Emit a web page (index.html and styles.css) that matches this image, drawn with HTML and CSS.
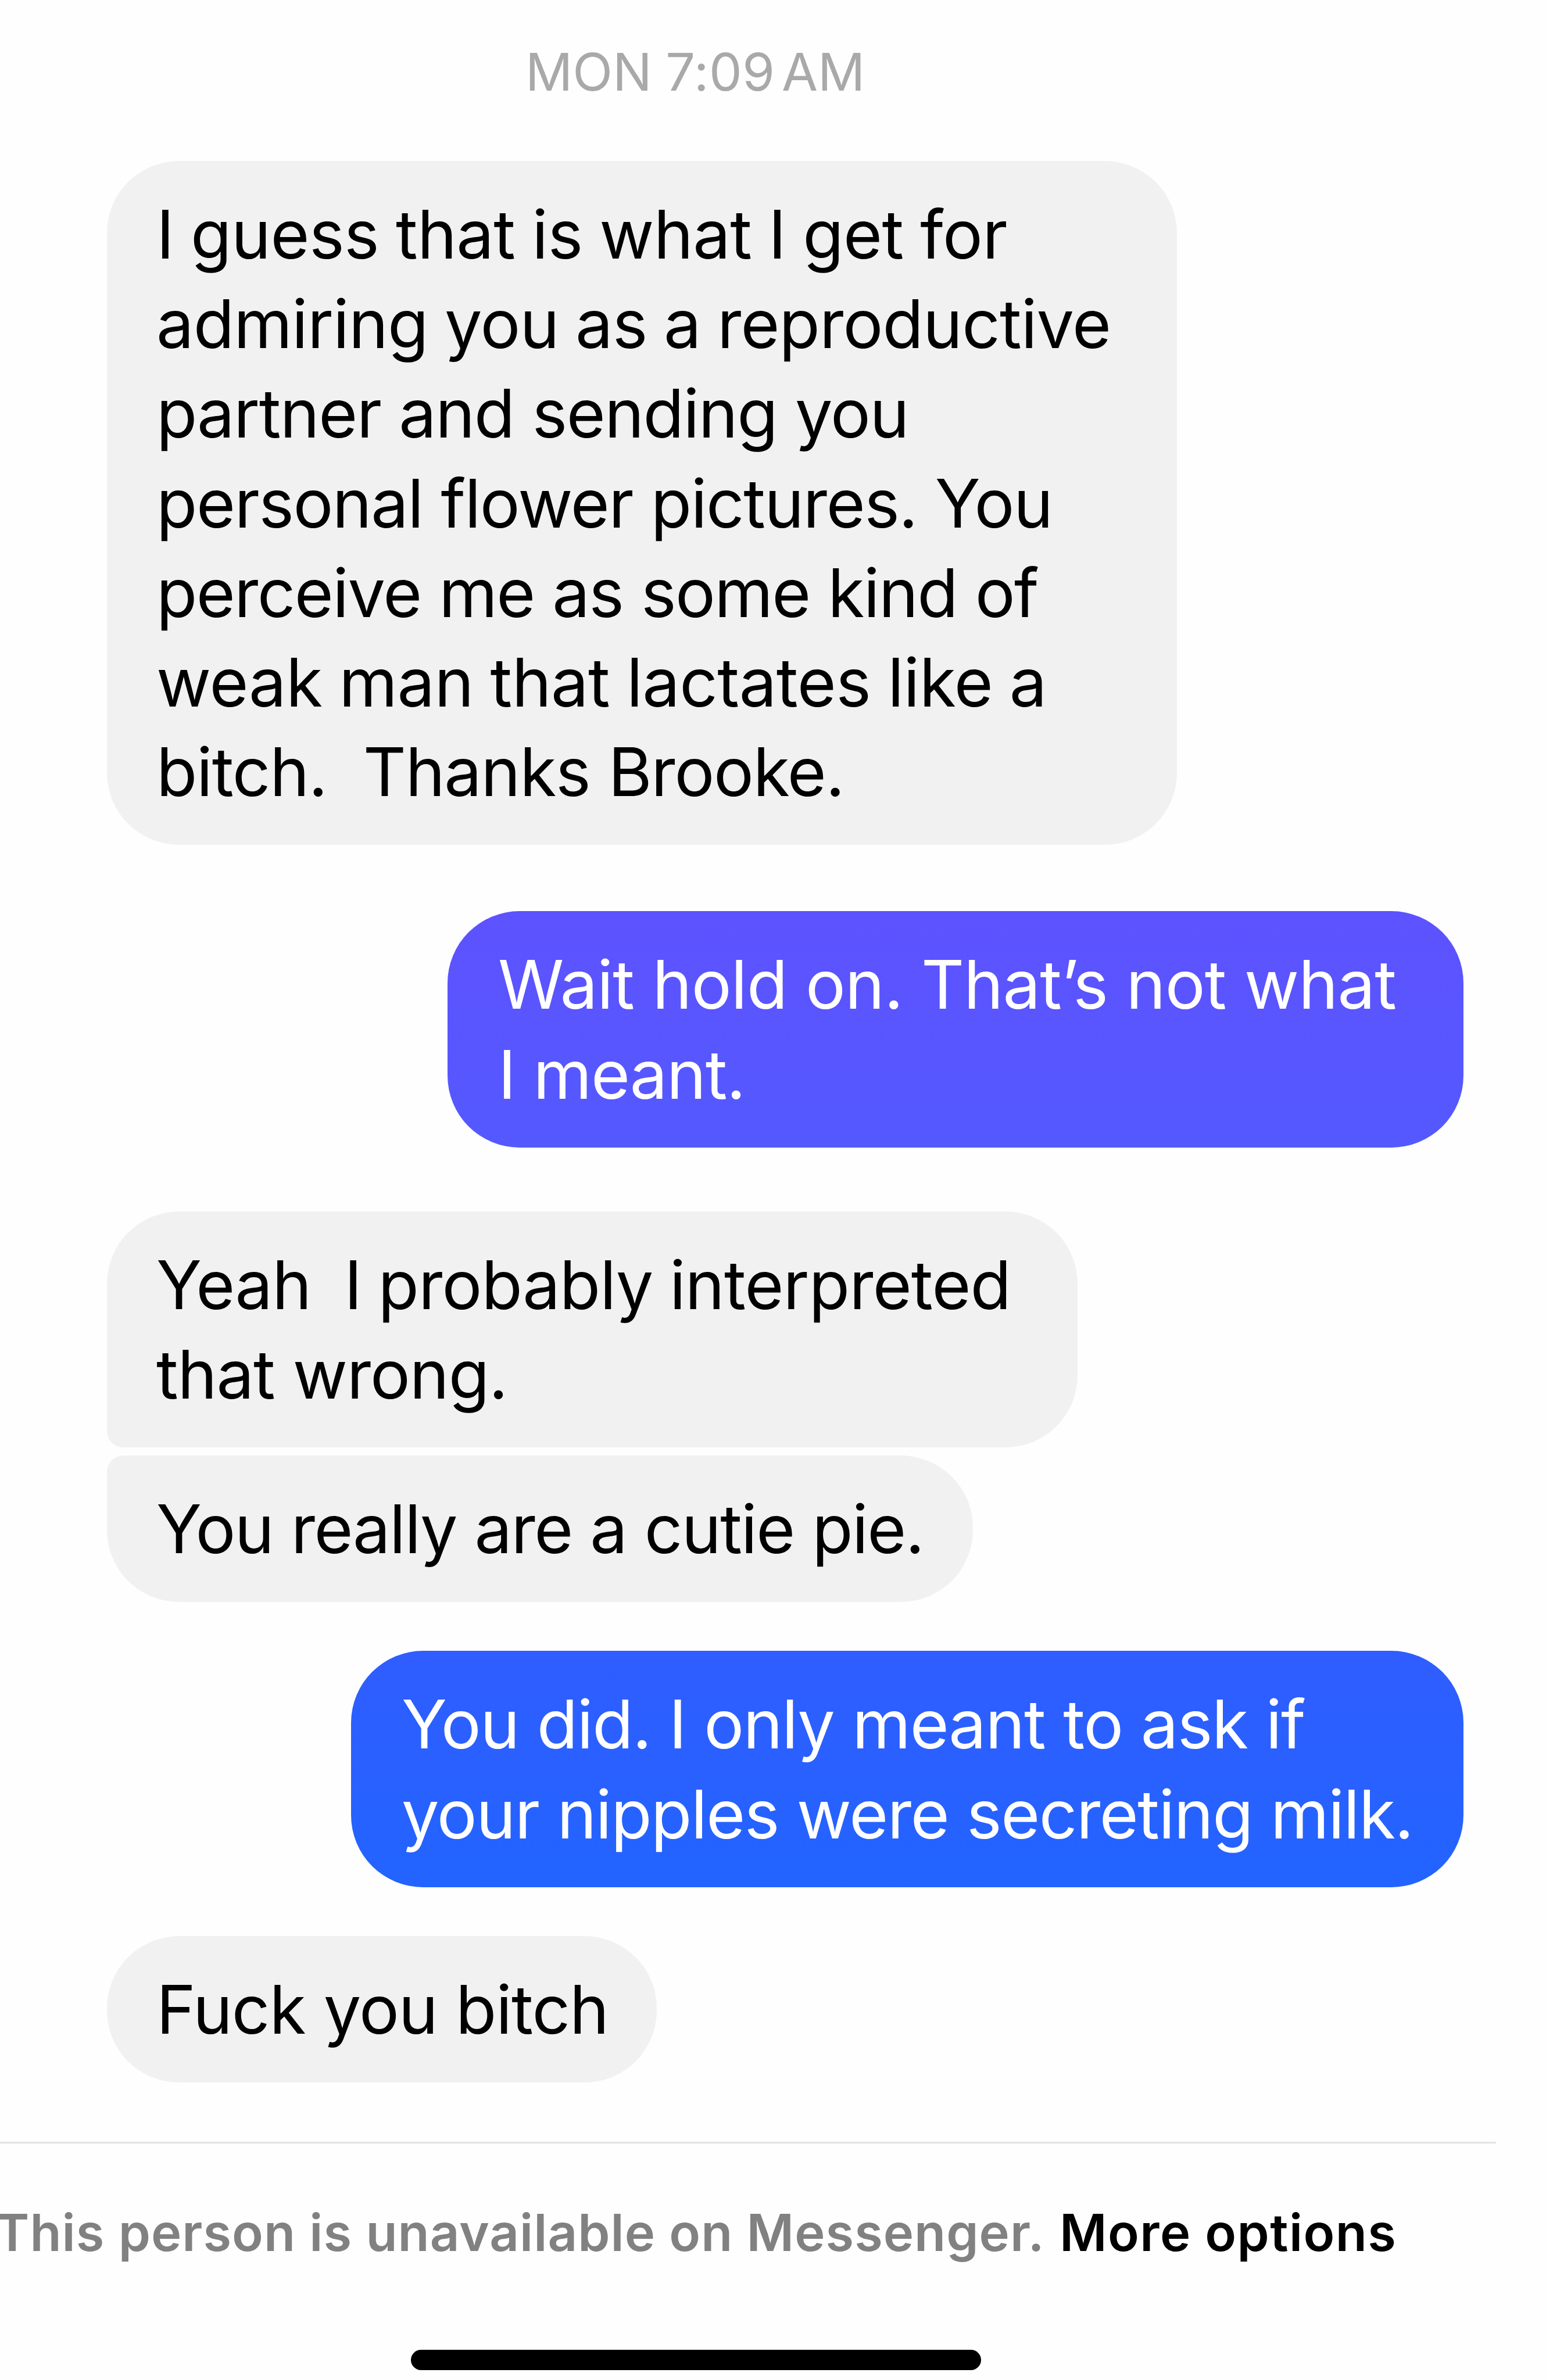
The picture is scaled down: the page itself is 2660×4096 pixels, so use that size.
FILE: index.html
```html
<!DOCTYPE html>
<html lang="en">
<head>
    <meta charset="UTF-8">
    <meta name="viewport" content="width=device-width, initial-scale=1.0">
    <title>Messenger</title>
    <link rel="stylesheet" href="styles.css">
</head>
<body>
    <div class="timestamp">MON <span class="time">7:09</span><span class="ampm"> AM</span></div>
    <div class="chat">
        <div class="bubble them guess">
            <span class="ls6 narrow">I guess that is what I get for</span>
            <span class="ls9 narrow">admiring you as a reproductive</span>
            <span class="ls15">partner and sending you</span>
            <span class="ls15">personal flower pictures. You</span>
            <span class="ls17">perceive me as some kind of</span>
            <span class="ls6 narrow">weak man that lactates like a</span>
            <span class="ls13">bitch.&nbsp; Thanks Brooke.</span>
        </div>
        <div class="bubble me wait">
            <span class="ls8">Wait hold on. That’s not what</span>
            <span class="ls13">I meant.</span>
        </div>
        <div class="bubble them yeah">
            <span class="ls9 narrow">Yeah&nbsp; I probably interpreted</span>
            <span class="ls11">that wrong.</span>
        </div>
        <div class="bubble them cutie">
            <span class="ls17">You really are a cutie pie.</span>
        </div>
        <div class="bubble me did">
            <span class="ls14">You did. I only meant to ask if</span>
            <span class="ls15">your nipples were secreting milk.</span>
        </div>
        <div class="bubble them last">
            <span class="ls11">Fuck you bitch</span>
        </div>
    </div>
    <div class="footer">
        <span class="unavailable">This person is unavailable on Messenger.</span>
        <span class="more">More options</span>
    </div>
    <div class="home-bar"></div>
</body>
</html>
```
FILE: styles.css
```css
body {
    margin: 0;
    height: 4096px;
    overflow: hidden;
    background: #fefefe;
    font-family: Inter, "Liberation Sans", sans-serif;
}
.timestamp {
    padding: 69px 0 0 904px;
    font-size: 90px;
    line-height: 109px;
    color: #a9a9a9;
    white-space: nowrap;
}
.time {
    margin-left: -2px;
    letter-spacing: 0.5px;
}
.ampm {
    word-spacing: -14px;
}
.chat {
    display: flex;
    flex-direction: column;
    align-items: flex-start;
    padding: 99px 142px 0 184px;
}
.bubble {
    box-sizing: border-box;
    padding: 50px 0 48px 85px;
    border-radius: 124px;
    font-size: 115px;
    line-height: 154.2px;
    white-space: nowrap;
}
.bubble span {
    display: block;
}
.them {
    background: #f1f1f1;
    color: #000;
}
.me {
    align-self: flex-end;
    padding-left: 87px;
    color: #fff;
}
.guess {
    width: 1841px;
}
.wait {
    width: 1748px;
    margin-top: 114px;
    background: linear-gradient(#5d52ff, #5459ff);
}
.yeah {
    width: 1670px;
    margin-top: 110px;
    border-bottom-left-radius: 28px;
}
.cutie {
    width: 1490px;
    margin-top: 14px;
    border-top-left-radius: 28px;
}
.did {
    width: 1914px;
    margin-top: 84px;
    background: linear-gradient(#305dff, #2264ff);
}
.last {
    width: 946px;
    margin-top: 84px;
}

/* per-line tracking */
.ls6 { letter-spacing: -0.58px; }
.ls8 { letter-spacing: -0.85px; }
.ls9 { letter-spacing: -0.92px; }
.ls11 { letter-spacing: -1.1px; }
.ls13 { letter-spacing: -1.32px; }
.ls14 { letter-spacing: -1.43px; }
.ls15 { letter-spacing: -1.52px; }
.ls17 { letter-spacing: -1.67px; }
.narrow { word-spacing: -3px; }

.footer {
    display: flex;
    box-sizing: border-box;
    width: 2574px;
    height: 358px;
    margin-top: 102px;
    padding-top: 99px;
    border-top: 3px solid #e2e2e2;
    font-size: 88.5px;
    font-weight: 600;
    line-height: 107px;
    white-space: nowrap;
}
.unavailable {
    width: 1831px;
    margin-left: -8px;
    letter-spacing: 1px;
    color: #818181;
}
.more {
    letter-spacing: 1.4px;
    color: #000;
}
.home-bar {
    width: 981px;
    height: 35px;
    margin-left: 707px;
    border-radius: 18px;
    background: #000;
}
```
